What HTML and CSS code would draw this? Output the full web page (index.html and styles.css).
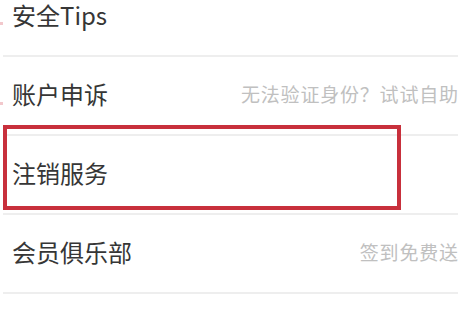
FILE: index.html
```html
<!DOCTYPE html>
<html lang="zh-CN">
<head>
<meta charset="utf-8">
<link rel="stylesheet" href="styles.css">
</head>
<body>
<div class="page">
  <ul class="menu">
    <li class="row"><span class="label">安全Tips</span></li>
    <li class="row"><span class="label">账户申诉</span><span class="hint">无法验证身份？试试自助</span></li>
    <li class="row"><span class="label">注销服务</span></li>
    <li class="row"><span class="label">会员俱乐部</span><span class="hint">签到免费送</span></li>
    <li class="row"></li>
  </ul>
  <div class="highlight"></div>
  <span class="mark mark-a"></span>
  <span class="mark mark-b"></span>
</div>
</body>
</html>
```
FILE: styles.css
```css
html, body {
  margin: 0;
  padding: 0;
  background: #ffffff;
  overflow: hidden;
}
.page {
  position: relative;
  width: 476px;
  height: 318px;
  overflow: hidden;
  font-family: "Noto Sans CJK SC", "Noto Sans", sans-serif;
}
.menu {
  list-style: none;
  margin: -22px 0 0 3px;
  padding: 0;
  width: 455px;
}
.row {
  height: 73px;
  padding-bottom: 4px;
  display: flex;
  align-items: center;
  justify-content: space-between;
  padding-left: 9px;
  border-bottom: 2px solid #eeeeee;
}
.label {
  font-size: 24px;
  color: #363636;
  line-height: 1;
}
.hint {
  font-size: 19px;
  letter-spacing: 0.8px;
  margin-right: -0.8px;
  color: #c0c0c0;
  line-height: 1;
}
.highlight {
  position: absolute;
  left: 3px;
  top: 125px;
  width: 390px;
  height: 77px;
  border: 4px solid #c8303c;
}
.mark {
  position: absolute;
  left: 0;
  width: 3px;
  height: 3px;
  background: #f2c8cc;
}
.mark-a { top: 22px; }
.mark-b { top: 102px; }
```
